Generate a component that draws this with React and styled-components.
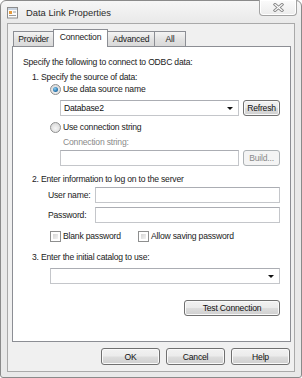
import React from "react";
import styled, { createGlobalStyle, css } from "styled-components";

const Global = createGlobalStyle`
  html, body { margin: 0; padding: 0; background: #ffffff; }
  body { font-family: "Liberation Sans", Arial, sans-serif; }
  * { box-sizing: border-box; }
`;

const Window = styled.div`
  width: 302px;
  height: 378px;
  border: 1px solid #8a8a8a;
  border-radius: 6px 6px 3px 3px;
  background: linear-gradient(#f6f6f6 0px, #e9e9e9 22px, #e9e9e9 100%);
  display: flex;
  flex-direction: column;
  font-size: 8.6px;
  letter-spacing: -0.2px;
  color: #1a1a1a;
`;

const TitleBar = styled.div`
  height: 22px;
  display: flex;
  align-items: center;
  padding-left: 5px;
  flex-shrink: 0;
`;

const TitleText = styled.span`
  margin-left: 7px;
  font-size: 9.4px;
  letter-spacing: 0;
  color: #2b2b2b;
  margin-top: 1px;
`;

const CloseButton = styled.div`
  align-self: flex-start;
  margin-top: -1px;
  margin-left: auto;
  margin-right: 4px;
  width: 38px;
  height: 16px;
  border: 1px solid #a3a3a3;
  border-top: none;
  border-radius: 0 0 4px 4px;
  background: linear-gradient(#fbfbfb, #ececec);
  box-shadow: inset 0 0 0 1px #ffffff;
  display: flex;
  align-items: center;
  justify-content: center;
`;

const Client = styled.div`
  margin: 0 6px 5px 6px;
  border: 1px solid #a9a9a9;
  background: #f0f0f0;
  flex: 1;
  display: flex;
  flex-direction: column;
  padding: 5px 3px 6px 4px;
`;

const TabRow = styled.div`
  display: flex;
  align-items: flex-end;
  height: 17px;
  padding-left: 1px;
  position: relative;
  z-index: 1;
`;

const Tab = styled.div`
  width: ${(p) => p.$w}px;
  height: 15px;
  border: 1px solid #8c8e94;
  border-bottom: none;
  margin-right: -1px;
  background: linear-gradient(#f4f4f4, #e3e3e3 50%, #d9d9d9);
  display: flex;
  align-items: center;
  justify-content: center;
  color: #1a1a1a;
  ${(p) =>
    p.$active &&
    css`
      height: 18px;
      margin-bottom: -1px;
      background: #ffffff;
      position: relative;
      z-index: 2;
      padding-bottom: 3px;
    `}
`;

const Panel = styled.div`
  height: 296px;
  border: 1px solid #8c8e94;
  background: #ffffff;
  display: flex;
  flex-direction: column;
  padding: 0 10px 0 0;
`;

const Line = styled.div`
  height: ${(p) => p.$h || 12}px;
  margin-top: ${(p) => p.$top}px;
  padding-left: ${(p) => p.$indent || 0}px;
  display: flex;
  align-items: center;
  gap: ${(p) => p.$gap || 0}px;
  white-space: nowrap;
  color: ${(p) => (p.$disabled ? "#8a8a8a" : "inherit")};
  justify-content: ${(p) => (p.$end ? "flex-end" : "flex-start")};
`;

const Radio = styled.span`
  width: 11px;
  height: 11px;
  border-radius: 50%;
  border: 1px solid #8e8f8f;
  background: radial-gradient(circle at 50% 60%, #f6f6f6 0%, #e0e0e0 60%, #cfcfcf 100%);
  display: inline-flex;
  align-items: center;
  justify-content: center;
  margin-right: 2px;
  flex-shrink: 0;
  &::after {
    content: "";
    width: 5px;
    height: 5px;
    border-radius: 50%;
    display: ${(p) => (p.$checked ? "block" : "none")};
    background: radial-gradient(circle at 40% 35%, #8fd0f3 0%, #2f7db5 55%, #154a75 100%);
  }
`;

const CheckItem = styled.span`
  display: inline-flex;
  align-items: center;
  width: ${(p) => (p.$w ? `${p.$w}px` : "auto")};
  flex-shrink: 0;
`;

const Check = styled.span`
  width: 11px;
  height: 11px;
  border: 1px solid #8e8f8f;
  background: #ffffff;
  padding: 2px;
  flex-shrink: 0;
  margin-right: 2px;
  display: inline-block;
  &::after {
    content: "";
    display: block;
    width: 100%;
    height: 100%;
    background: linear-gradient(135deg, #d6d6d6, #f3f3f3);
  }
`;

const Field = styled.div`
  flex: 1;
  height: 16px;
  border: 1px solid #c4c6ca;
  border-top-color: #abadb3;
  background: #ffffff;
  display: flex;
  align-items: center;
  padding: 0 3px;
  color: #111;
`;

const Arrow = styled.span`
  margin-left: auto;
  margin-right: 2px;
  width: 0;
  height: 0;
  border-left: 3px solid transparent;
  border-right: 3px solid transparent;
  border-top: 3px solid #111;
`;

const Button = styled.div`
  width: ${(p) => p.$w}px;
  height: ${(p) => p.$h || 16}px;
  flex-shrink: 0;
  border: 1px solid #707070;
  border-radius: 3px;
  background: linear-gradient(#f2f2f2 0%, #ebebeb 48%, #dddddd 52%, #cfcfcf 100%);
  box-shadow: inset 0 0 0 1px #fafafa;
  display: flex;
  align-items: center;
  justify-content: center;
  color: #111;
  ${(p) =>
    p.$disabled &&
    css`
      border-color: #adb2b5;
      background: #f4f4f4;
      box-shadow: none;
      color: #8a8a8a;
    `}
`;

const FieldLabel = styled.span`
  width: ${(p) => p.$w}px;
  flex-shrink: 0;
`;

const ButtonBar = styled.div`
  margin-top: 6px;
  height: 17px;
  display: flex;
  justify-content: flex-end;
  gap: 6px;
  padding-right: 1px;
`;

function TitleIcon() {
  return (
    <svg width="13" height="13" viewBox="0 0 13 13">
      <rect x="1.5" y="1.5" width="10" height="10.5" fill="#fbfbfb" stroke="#8c8c8c" />
      <rect x="2" y="2" width="9" height="2" fill="#c9d3df" />
      <rect x="3" y="5" width="3" height="3" fill="#e59a3c" />
      <line x1="7" y1="6" x2="10" y2="6" stroke="#9a9a9a" />
      <line x1="3" y1="9.5" x2="10" y2="9.5" stroke="#9a9a9a" />
    </svg>
  );
}

function CloseGlyph() {
  return (
    <svg width="11" height="9" viewBox="0 0 11 9">
      <path d="M2 1.5 L9 7.5 M9 1.5 L2 7.5" stroke="#8a8a8a" strokeWidth="3" strokeLinecap="square" />
      <path d="M2 1.5 L9 7.5 M9 1.5 L2 7.5" stroke="#ffffff" strokeWidth="1.2" strokeLinecap="square" />
    </svg>
  );
}

export default function App() {
  return (
    <>
      <Global />
      <Window>
        <TitleBar>
          <TitleIcon />
          <TitleText>Data Link Properties</TitleText>
          <CloseButton>
            <CloseGlyph />
          </CloseButton>
        </TitleBar>
        <Client>
          <TabRow>
            <Tab $w={41}>Provider</Tab>
            <Tab $w={55} $active>Connection</Tab>
            <Tab $w={48}>Advanced</Tab>
            <Tab $w={32}>All</Tab>
          </TabRow>
          <Panel>
            <Line $top={9} $indent={10}>Specify the following to connect to ODBC data:</Line>
            <Line $top={3} $indent={19}>1. Specify the source of data:</Line>
            <Line $top={0} $indent={37}>
              <Radio $checked />
              Use data source name
            </Line>
            <Line $top={5} $indent={47} $h={16} $gap={4}>
              <Field>
                Database2
                <Arrow />
              </Field>
              <Button $w={37}>Refresh</Button>
            </Line>
            <Line $top={5} $indent={37}>
              <Radio />
              Use connection string
            </Line>
            <Line $top={3} $indent={50} $disabled>Connection string:</Line>
            <Line $top={2} $indent={47} $h={16} $gap={4}>
              <Field />
              <Button $w={37} $disabled>Build...</Button>
            </Line>
            <Line $top={7} $indent={19}>2. Enter information to log on to the server</Line>
            <Line $top={2} $indent={35} $h={16}>
              <FieldLabel $w={47}>User name:</FieldLabel>
              <Field />
            </Line>
            <Line $top={4} $indent={35} $h={16}>
              <FieldLabel $w={47}>Password:</FieldLabel>
              <Field />
            </Line>
            <Line $top={7} $indent={37}>
              <CheckItem $w={88}>
                <Check />
                Blank password
              </CheckItem>
              <CheckItem>
                <Check />
                Allow saving password
              </CheckItem>
            </Line>
            <Line $top={9} $indent={19}>3. Enter the initial catalog to use:</Line>
            <Line $top={5} $indent={37} $h={16}>
              <Field>
                <Arrow />
              </Field>
            </Line>
            <Line $top={16} $h={16} $end>
              <Button $w={96}>Test Connection</Button>
            </Line>
          </Panel>
          <ButtonBar>
            <Button $w={59} $h={17}>OK</Button>
            <Button $w={59} $h={17}>Cancel</Button>
            <Button $w={59} $h={17}>Help</Button>
          </ButtonBar>
        </Client>
      </Window>
    </>
  );
}
